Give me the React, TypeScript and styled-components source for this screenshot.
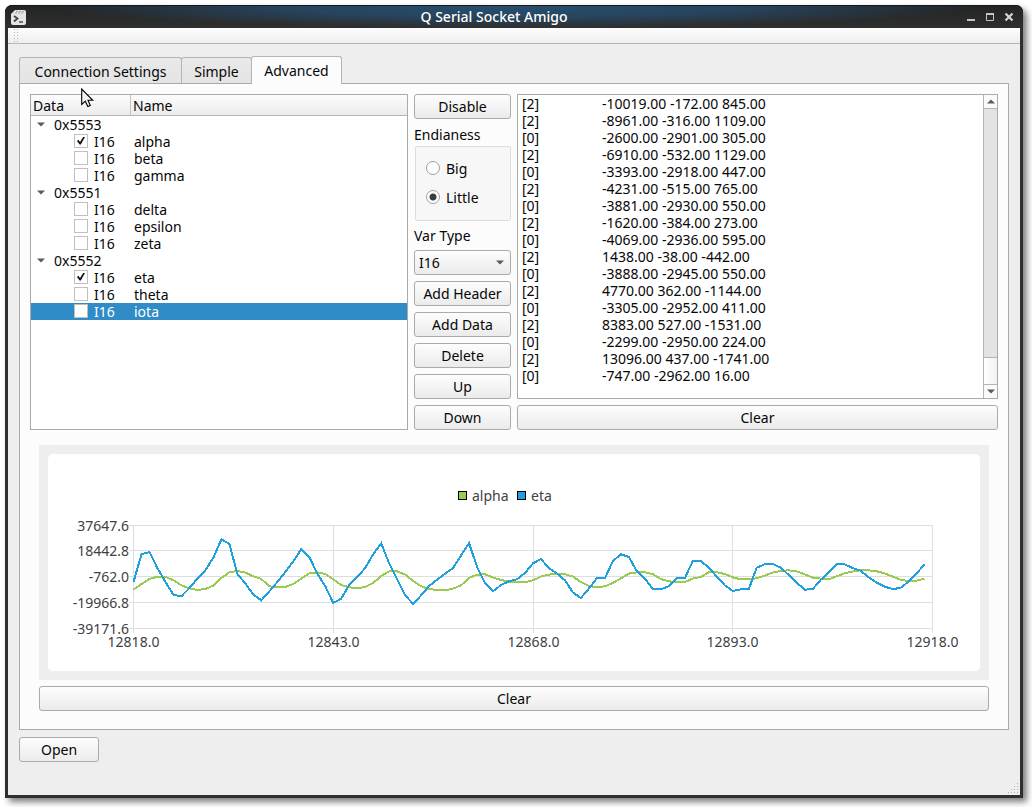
import React, { useState } from "react";
import styled, { createGlobalStyle, css } from "styled-components";

const GlobalStyle = createGlobalStyle`
  *, *::before, *::after { box-sizing: border-box; }
  body { margin: 0; background: #ffffff; }
  body, button, select, textarea, input {
    font-family: "Noto Sans", "Open Sans", sans-serif;
    font-size: 14px;
    line-height: 17px;
    color: #060606;
  }
`;

const Desktop = styled.div`
  display: flex;
  min-height: 100vh;
  padding: 5px 9px 9px 5px;
`;

const Window = styled.div`
  position: relative;
  flex: 1;
  min-width: 0;
  display: flex;
  flex-direction: column;
  background: #2f2f2f;
  border-radius: 7px 7px 0 0;
  padding: 0 3px 3px;
  box-shadow: 4px 4px 6px rgba(0, 0, 0, 0.5);
`;

const TitleBar = styled.header`
  display: flex;
  align-items: center;
  height: 23px;
  margin: 0 -3px;
  padding: 0 5px;
  border-top: 1px solid #141618;
  border-radius: 7px 7px 0 0;
  background:
    radial-gradient(ellipse 46% 100% at 50% 0, rgba(40, 84, 122, 0.9) 0, rgba(40, 84, 122, 0.65) 50%, rgba(42, 70, 96, 0) 100%),
    linear-gradient(#222425, #2f2f2f);
`;

const Title = styled.h1`
  flex: 1;
  margin: 0;
  text-align: center;
  font-size: 14px;
  line-height: 22px;
  font-weight: 500;
  color: #ffffff;
`;

const WindowButton = styled.button`
  width: 19px;
  height: 20px;
  padding: 0;
  border: 0;
  background: none;
  display: grid;
  place-items: center;
`;

const ToolBar = styled.div`
  height: 16px;
  padding: 0 5px;
  background: linear-gradient(#fdfdfd, #eeeeee);
  border-bottom: 1px solid #b4b4b4;
`;

const Grip = styled.div`
  width: 6px;
  height: 15px;
  background: radial-gradient(circle, #b4b4b4 1px, transparent 1px) 0 0 / 3px 3px;
`;

const Body = styled.main`
  position: relative;
  flex: 1;
  padding: 12px 11px 32px;
  background: #eeeeee;
`;

const TabList = styled.div`
  display: flex;
  align-items: flex-end;
  height: 28px;
`;

const Tab = styled.button<{ $width: number; $active?: boolean }>`
  position: relative;
  width: ${(p) => p.$width}px;
  height: 26px;
  padding: 2px 0 0;
  margin: 0 -1px 1px 0;
  border: 1px solid #b4b4b4;
  border-bottom: 0;
  border-radius: 3px 3px 0 0;
  background: linear-gradient(#e9e9e9, #e4e4e4);
  ${(p) =>
    p.$active &&
    css`
      height: 28px;
      margin-bottom: 0;
      z-index: 1;
      background: #fcfcfc;
      padding: 0 0 1px;
    `}
`;

const TabPanel = styled.section`
  margin-top: -1px;
  padding: 10px 10px 18px;
  border: 1px solid #aaaaaa;
  background: #fcfcfc;
`;

const Upper = styled.div`
  display: grid;
  grid-template-columns: minmax(0, 378fr) 97px minmax(0, 481fr);
  gap: 6px;
`;

const TreeFrame = styled.div`
  border: 1px solid #aaaaaa;
  background: #ffffff;
`;

const Tree = styled.table`
  width: 100%;
  table-layout: fixed;
  border-collapse: separate;
  border-spacing: 0;
  th {
    height: 21px;
    padding: 2px 2px 0;
    text-align: left;
    font-weight: 400;
    line-height: 18px;
    background: linear-gradient(#fcfcfc, #ececec);
    border-bottom: 1px solid #b4b4b4;
  }
  th:first-child {
    width: 100px;
    border-right: 1px solid #c4c4c4;
  }
  td {
    height: 17px;
    padding: 0;
  }
`;

const TreeRow = styled.tr<{ $selected?: boolean }>`
  ${(p) =>
    p.$selected &&
    css`
      background: #308cc6;
      color: #ffffff;
    `}
`;

const GroupCell = styled.div`
  display: flex;
  align-items: center;
  gap: 9px;
  padding-left: 6px;
  height: 17px;
`;

const ItemCell = styled.label`
  display: flex;
  align-items: center;
  gap: 6px;
  padding-left: 43px;
  height: 17px;
`;

const NameCell = styled.td`
  && { padding-left: 3px; }
`;

const Check = styled.input`
  appearance: none;
  width: 14px;
  height: 14px;
  margin: 0 0 2px;
  border: 1px solid #c0c0c0;
  background: #ffffff;
  &:checked::before {
    content: "";
    display: block;
    width: 8px;
    height: 8px;
    margin: 2px;
    background: #141414;
    clip-path: polygon(0 55%, 18% 42%, 38% 68%, 80% 0, 100% 6%, 48% 100%, 32% 100%);
  }
`;

const Controls = styled.div`
  display: flex;
  flex-direction: column;
  gap: 6px;
`;

const Button = styled.button`
  height: 25px;
  padding: 0 6px;
  border: 1px solid #aaaaaa;
  border-radius: 3px;
  background: linear-gradient(#fdfdfd, #ebebeb);
  white-space: nowrap;
`;

const FieldSet = styled.fieldset`
  margin: 0;
  padding: 0;
  border: 0;
`;

const Legend = styled.legend`
  padding: 0;
  height: 21px;
  line-height: 19px;
`;

const RadioBox = styled.div`
  display: flex;
  flex-direction: column;
  gap: 12px;
  height: 75px;
  margin-left: 1px;
  padding: 13px 10px;
  border: 1px solid #dddddd;
  border-radius: 2px;
  background: #f7f7f7;
`;

const RadioLabel = styled.label`
  display: flex;
  align-items: center;
  gap: 6px;
  height: 17px;
`;

const Radio = styled.input`
  appearance: none;
  width: 14px;
  height: 14px;
  margin: 0 0 2px;
  border: 1px solid #a0a0a0;
  border-radius: 50%;
  background: #ffffff;
  &:checked {
    background: radial-gradient(circle, #3c3c3c 3px, #ffffff 4px);
  }
`;

const SelectLabel = styled.label`
  height: 17px;
`;

const SelectWrap = styled.div`
  position: relative;
  display: grid;
  svg {
    position: absolute;
    right: 7px;
    top: 10px;
    pointer-events: none;
  }
`;

const Select = styled.select`
  appearance: none;
  height: 25px;
  padding: 0 4px;
  border: 1px solid #aaaaaa;
  border-radius: 3px;
  background: linear-gradient(#fdfdfd, #ebebeb);
`;

const LogColumn = styled.div`
  display: grid;
  grid-template-rows: 1fr auto;
  gap: 6px;
`;

const LogFrame = styled.div`
  display: flex;
  border: 1px solid #aaaaaa;
  background: #ffffff;
`;

const Log = styled.textarea`
  flex: 1;
  min-width: 0;
  padding: 0 4px;
  border: 0;
  outline: 0;
  resize: none;
  overflow: hidden;
  white-space: pre;
  tab-size: 80px;
  background: transparent;
`;

const ScrollBar = styled.div`
  display: flex;
  flex-direction: column;
  width: 14px;
  border-left: 1px solid #b4b4b4;
  background: #e3e3e3;
`;

const ScrollArrow = styled.button`
  display: grid;
  place-items: center;
  height: 13px;
  padding: 0;
  border: 0;
  background: #fafafa;
`;

const ScrollTrack = styled.div`
  flex: 1;
  display: flex;
  flex-direction: column;
  justify-content: flex-end;
  border: solid #b4b4b4;
  border-width: 1px 0;
`;

const ScrollThumb = styled.div`
  height: 27px;
  border-top: 1px solid #b4b4b4;
  background: linear-gradient(90deg, #ffffff, #f0f0f0);
`;

const Lower = styled.div`
  display: flex;
  flex-direction: column;
  gap: 6px;
  margin: 15px 9px 0;
`;

const ChartFrame = styled.div`
  padding: 9px;
  background: #eeeeee;
`;

const Chart = styled.svg`
  display: block;
  width: 100%;
  height: auto;
  border-radius: 5px;
  background: #ffffff;
  text { fill: #404044; font-size: 14px; }
`;

const Footer = styled.footer`
  display: flex;
  margin-top: 7px;
  ${Button} { width: 80px; }
`;

const SizeGrip = styled.svg`
  position: absolute;
  right: 1px;
  bottom: 1px;
`;

const Pointer = styled.svg`
  position: absolute;
  left: 76px;
  top: 83px;
  z-index: 2;
  pointer-events: none;
`;

const Arrow = ({ up = false }: { up?: boolean }) => (
  <svg width="8" height="5" viewBox="0 0 8 5" aria-hidden="true">
    <path d={up ? "M0 4.5L4 0.5L8 4.5Z" : "M0 0.5H8L4 4.5Z"} fill="#5a5a5a" />
  </svg>
);

const groups = [
  { id: "0x5553", items: ["alpha", "beta", "gamma"] },
  { id: "0x5551", items: ["delta", "epsilon", "zeta"] },
  { id: "0x5552", items: ["eta", "theta", "iota"] },
];

const log = [
  [2, "-10019.00 -172.00 845.00"],
  [2, "-8961.00 -316.00 1109.00"],
  [0, "-2600.00 -2901.00 305.00"],
  [2, "-6910.00 -532.00 1129.00"],
  [0, "-3393.00 -2918.00 447.00"],
  [2, "-4231.00 -515.00 765.00"],
  [0, "-3881.00 -2930.00 550.00"],
  [2, "-1620.00 -384.00 273.00"],
  [0, "-4069.00 -2936.00 595.00"],
  [2, "1438.00 -38.00 -442.00"],
  [0, "-3888.00 -2945.00 550.00"],
  [2, "4770.00 362.00 -1144.00"],
  [0, "-3305.00 -2952.00 411.00"],
  [2, "8383.00 527.00 -1531.00"],
  [0, "-2299.00 -2950.00 224.00"],
  [2, "13096.00 437.00 -1741.00"],
  [0, "-747.00 -2962.00 16.00"],
]
  .map(([id, values]) => `[${id}]\t${values}`)
  .join("\n");

// Samples are depths below the plot's top area, three steps to a pixel.
const alpha = [
  328, 311, 296, 289, 290, 300, 315, 324, 329, 326, 316, 293, 276, 272, 277, 288, 296, 318, 321, 320,
  311, 295, 279, 276, 281, 297, 314, 321, 324, 320, 308, 287, 273, 273, 283, 302, 318, 326, 329, 330,
  325, 315, 293, 283, 282, 292, 299, 304, 306, 306, 300, 289, 283, 281, 282, 289, 305, 317, 321, 318,
  308, 294, 280, 276, 276, 282, 296, 303, 306, 305, 295, 290, 276, 276, 281, 291, 297, 297, 294, 286,
  277, 272, 270, 273, 282, 292, 295, 297, 288, 279, 274, 270, 270, 273, 279, 289, 298, 303, 301, 295,
];
const eta = [
  305, 222, 215, 264, 305, 344, 348, 323, 295, 270, 232, 177, 191, 281, 310, 343, 360, 333, 305, 275,
  243, 206, 230, 280, 318, 368, 355, 314, 290, 263, 222, 189, 250, 298, 345, 371, 345, 317, 298, 280,
  263, 225, 189, 260, 308, 333, 314, 303, 297, 278, 249, 236, 264, 280, 300, 337, 353, 325, 294, 294,
  242, 222, 230, 273, 295, 327, 327, 318, 294, 294, 242, 242, 262, 289, 315, 332, 327, 327, 262, 252,
  251, 262, 284, 307, 328, 327, 299, 276, 251, 252, 263, 271, 291, 307, 319, 326, 323, 304, 280, 252,
];
const line = (samples: number[]) =>
  samples.map((v, i) => `${(85.5 + i * 7.99).toFixed(1)},${(26.3 + v / 3).toFixed(1)}`).join(" ");

const yAxis: [number, string][] = [
  [71.5, "37647.6"],
  [96.5, "18442.8"],
  [122.5, "-762.0"],
  [148.5, "-19966.8"],
  [174.5, "-39171.6"],
];
const xAxis: [number, string][] = [
  [85.5, "12818.0"],
  [285.5, "12843.0"],
  [485.5, "12868.0"],
  [684.5, "12893.0"],
  [884.5, "12918.0"],
];

const gripDots = [[9, 0], [6, 3], [9, 3], [3, 6], [6, 6], [9, 6], [0, 9], [3, 9], [6, 9], [9, 9]];

export default function App() {
  const [checked, setChecked] = useState<string[]>(["alpha", "eta"]);
  const [selected, setSelected] = useState("iota");
  const [endian, setEndian] = useState("Little");

  const toggle = (name: string) =>
    setChecked((c) => (c.includes(name) ? c.filter((n) => n !== name) : [...c, name]));

  return (
    <Desktop>
      <GlobalStyle />
      <Window>
        <TitleBar>
          <svg width="17" height="17" viewBox="0 0 17 17" aria-hidden="true">
            <path d="M5 1H14Q16 1 16 3V14Q16 16 14 16H3Q1 16 1 14V5Z" fill="#e4e4e4" />
            <path d="M6 2.5H14M5 4H14" stroke="#a4a4a4" strokeDasharray="2 1" />
            <path d="M4 7L7.5 9.5L4 12.5" fill="none" stroke="#444" strokeWidth="1.8" />
            <path d="M9 13H13" stroke="#444" strokeWidth="1.4" />
          </svg>
          <Title>Q Serial Socket Amigo</Title>
          <WindowButton aria-label="Minimize">
            <svg width="10" height="10"><path d="M1 8H9" stroke="#c4c4c4" strokeWidth="2" /></svg>
          </WindowButton>
          <WindowButton aria-label="Maximize">
            <svg width="10" height="10">
              <path d="M1.5 2V8.5H8.5V2" fill="none" stroke="#c4c4c4" />
              <path d="M1 2H9" stroke="#c4c4c4" strokeWidth="2" />
            </svg>
          </WindowButton>
          <WindowButton aria-label="Close">
            <svg width="10" height="10"><path d="M1.5 1.5L8.5 8.5M8.5 1.5L1.5 8.5" stroke="#d4d4d4" strokeWidth="2.2" /></svg>
          </WindowButton>
        </TitleBar>
        <ToolBar><Grip /></ToolBar>
        <Body>
          <TabList role="tablist">
            <Tab role="tab" aria-selected={false} $width={163}>Connection Settings</Tab>
            <Tab role="tab" aria-selected={false} $width={71}>Simple</Tab>
            <Tab role="tab" aria-selected $width={91} $active>Advanced</Tab>
          </TabList>
          <TabPanel role="tabpanel">
            <Upper>
              <TreeFrame>
                <Tree>
                  <thead>
                    <tr>
                      <th>Data</th>
                      <th>Name</th>
                    </tr>
                  </thead>
                  <tbody>
                    {groups.map((g) => (
                      <React.Fragment key={g.id}>
                        <TreeRow>
                          <td><GroupCell><Arrow />{g.id}</GroupCell></td>
                          <NameCell />
                        </TreeRow>
                        {g.items.map((name) => (
                          <TreeRow key={name} $selected={selected === name} onClick={() => setSelected(name)}>
                            <td>
                              <ItemCell>
                                <Check type="checkbox" checked={checked.includes(name)} onChange={() => toggle(name)} />
                                I16
                              </ItemCell>
                            </td>
                            <NameCell>{name}</NameCell>
                          </TreeRow>
                        ))}
                      </React.Fragment>
                    ))}
                  </tbody>
                </Tree>
              </TreeFrame>
              <Controls>
                <Button>Disable</Button>
                <FieldSet>
                  <Legend>Endianess</Legend>
                  <RadioBox>
                    {["Big", "Little"].map((name) => (
                      <RadioLabel key={name}>
                        <Radio type="radio" name="endian" checked={endian === name} onChange={() => setEndian(name)} />
                        {name}
                      </RadioLabel>
                    ))}
                  </RadioBox>
                </FieldSet>
                <SelectLabel htmlFor="var-type">Var Type</SelectLabel>
                <SelectWrap>
                  <Select id="var-type"><option>I16</option></Select>
                  <Arrow />
                </SelectWrap>
                <Button>Add Header</Button>
                <Button>Add Data</Button>
                <Button>Delete</Button>
                <Button>Up</Button>
                <Button>Down</Button>
              </Controls>
              <LogColumn>
                <LogFrame>
                  <Log readOnly aria-label="Received data" value={log} />
                  <ScrollBar>
                    <ScrollArrow aria-label="Scroll up"><Arrow up /></ScrollArrow>
                    <ScrollTrack><ScrollThumb /></ScrollTrack>
                    <ScrollArrow aria-label="Scroll down"><Arrow /></ScrollArrow>
                  </ScrollBar>
                </LogFrame>
                <Button>Clear</Button>
              </LogColumn>
            </Upper>
            <Lower>
              <ChartFrame>
                <Chart viewBox="0 0 932 217" role="img" aria-label="alpha and eta over time">
                  <rect x="410.5" y="37.5" width="8" height="8" fill="#99ca53" stroke="#000" />
                  <text x="424" y="47">alpha</text>
                  <rect x="469.5" y="37.5" width="8" height="8" fill="#209fdf" stroke="#000" />
                  <text x="483" y="47">eta</text>
                  {yAxis.map(([y, label]) => (
                    <React.Fragment key={label}>
                      <path d={`M81 ${y}H885`} stroke="#dedede" />
                      <text x="81" y={y + 5.5} textAnchor="end">{label}</text>
                    </React.Fragment>
                  ))}
                  {xAxis.map(([x, label]) => (
                    <React.Fragment key={label}>
                      <path d={`M${x} 71V179`} stroke="#dedede" />
                      <text x={x} y="193" textAnchor="middle">{label}</text>
                    </React.Fragment>
                  ))}
                  <g fill="none" strokeWidth="2" shapeRendering="crispEdges">
                    <polyline points={line(alpha)} stroke="#99ca53" />
                    <polyline points={line(eta)} stroke="#209fdf" />
                  </g>
                </Chart>
              </ChartFrame>
              <Button>Clear</Button>
            </Lower>
          </TabPanel>
          <Footer><Button>Open</Button></Footer>
          <SizeGrip width="11" height="11" aria-hidden="true">
            {gripDots.map(([x, y]) => (
              <rect key={`${x}-${y}`} x={x} y={y} width="1" height="1" fill="#b0b0b0" />
            ))}
          </SizeGrip>
        </Body>
        <Pointer width="13" height="20" viewBox="0 0 13 20" aria-hidden="true">
          <path d="M0.7 1V16.5L4.3 13.2L6.8 18.6L9.3 17.5L7 12.3H11.8Z" fill="#f4f4f4" stroke="#000" strokeWidth="1.1" />
        </Pointer>
      </Window>
    </Desktop>
  );
}
